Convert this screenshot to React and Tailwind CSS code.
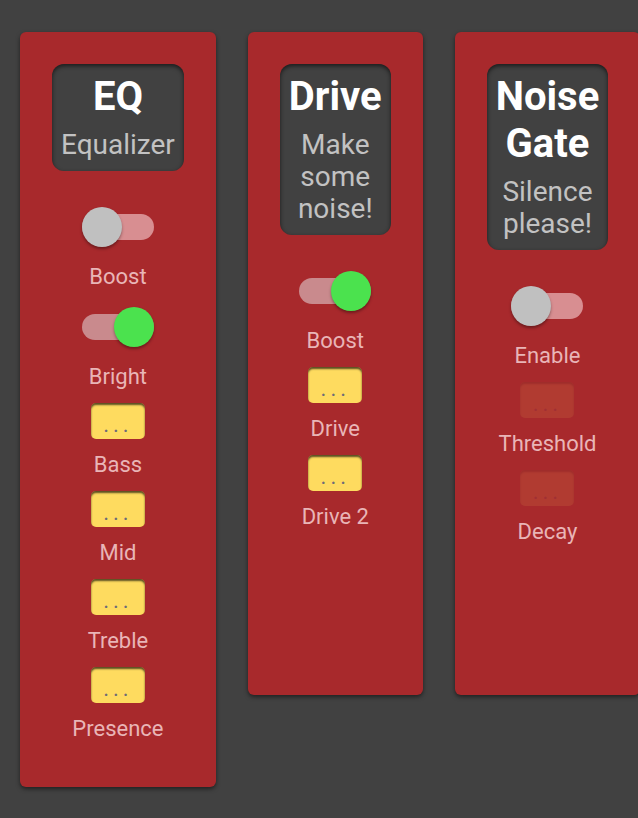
import React from "react";

function Toggle({ on }) {
  return (
    <div className="relative w-[80px] h-[48px] shrink-0">
      <div
        className={
          "absolute left-[4px] top-[11px] w-[72px] h-[26px] rounded-full " +
          (on ? "bg-[#c98a8d]" : "bg-[#d88e91]")
        }
      />
      <div
        className={
          "absolute top-[4px] w-[40px] h-[40px] rounded-full shadow-[0_2px_3px_rgba(0,0,0,0.35)] " +
          (on ? "left-[36px] bg-[#4be24e]" : "left-[4px] bg-[#c0c0c0]")
        }
      />
    </div>
  );
}

function Knob({ disabled }) {
  return (
    <div
      className={
        "w-[54px] h-[36px] rounded-[5px] bg-[#fedb5f] shadow-[inset_0_2px_2px_rgba(0,0,0,0.65)] flex items-end justify-center pb-[1px] " +
        (disabled ? "opacity-10" : "")
      }
    >
      <span className="text-[22px] leading-[26px] tracking-[4px] text-[#6c6b78]">...</span>
    </div>
  );
}

function Item({ type, label, on, disabled }) {
  return (
    <div className="flex flex-col items-center mb-[13px]">
      {type === "toggle" ? <Toggle on={on} /> : <Knob disabled={disabled} />}
      <div className="mt-[13px] text-[22px] leading-[26px] text-[#e9b5b7] whitespace-nowrap">{label}</div>
    </div>
  );
}

function Card({ title, subtitle, items }) {
  return (
    <div className="shrink-0 flex flex-col items-center bg-[#a8292c] rounded-[6px] p-[32px] min-h-[663px] shadow-[0_2px_4px_rgba(0,0,0,0.5)]">
      <div className="w-min rounded-[12px] bg-[#414141] px-[9px] pt-[9px] pb-[10px] text-center shadow-[inset_0_2px_4px_rgba(0,0,0,0.6)] mb-[32px]">
        <div className="text-[40px] leading-[47px] font-bold text-white mb-[9px]">{title}</div>
        <div className="text-[28px] leading-[32px] text-[#c2c2c2]">{subtitle}</div>
      </div>
      {items.map((it, i) => (
        <Item key={i} {...it} />
      ))}
    </div>
  );
}

export default function App() {
  return (
    <div className="min-h-screen w-full overflow-hidden bg-[#414141] font-['Roboto',sans-serif]">
      <div className="flex items-start gap-[32px] pl-[20px] pt-[32px]">
        <Card
          title="EQ"
          subtitle="Equalizer"
          items={[
            { type: "toggle", label: "Boost", on: false },
            { type: "toggle", label: "Bright", on: true },
            { type: "knob", label: "Bass" },
            { type: "knob", label: "Mid" },
            { type: "knob", label: "Treble" },
            { type: "knob", label: "Presence" },
          ]}
        />
        <Card
          title="Drive"
          subtitle="Make some noise!"
          items={[
            { type: "toggle", label: "Boost", on: true },
            { type: "knob", label: "Drive" },
            { type: "knob", label: "Drive 2" },
          ]}
        />
        <Card
          title="Noise Gate"
          subtitle="Silence please!"
          items={[
            { type: "toggle", label: "Enable", on: false },
            { type: "knob", label: "Threshold", disabled: true },
            { type: "knob", label: "Decay", disabled: true },
          ]}
        />
      </div>
    </div>
  );
}
